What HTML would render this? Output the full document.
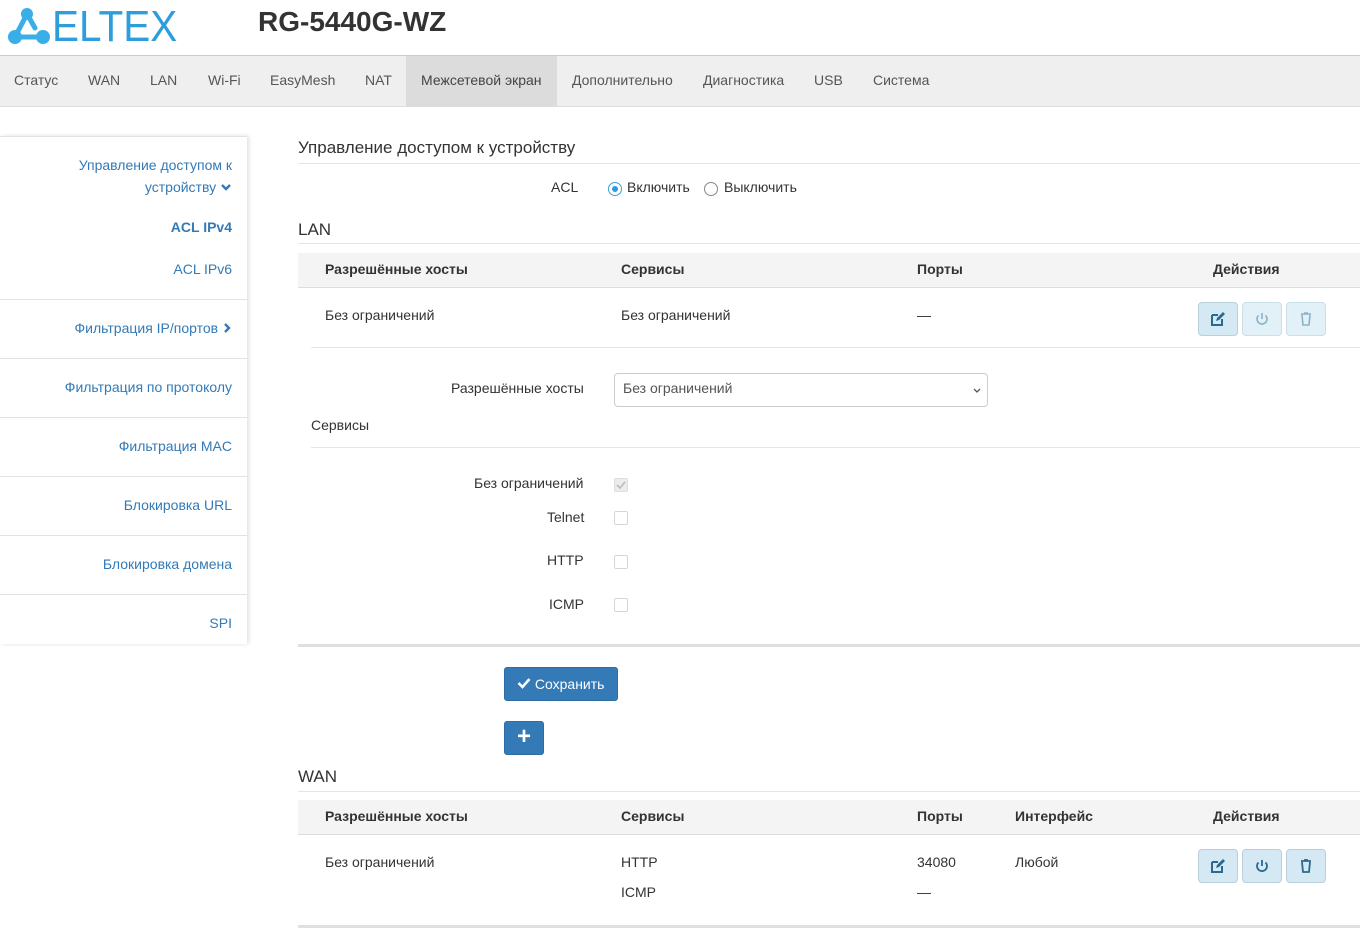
<!DOCTYPE html>
<html><head><meta charset="utf-8"><style>
*{box-sizing:border-box;margin:0;padding:0}
body{width:1360px;height:940px;overflow:hidden;background:#fff;font-family:"Liberation Sans",Arial,sans-serif;font-size:14px;color:#333;position:relative}
.a{position:absolute;white-space:nowrap}
.nav{position:absolute;left:0;top:55px;width:1360px;height:52px;background:#efefef;border-top:1px solid #ccc;border-bottom:1px solid #ddd}
.nav span{position:absolute;top:16px;color:#555;font-size:14px}
.side{position:absolute;left:0;top:136px;width:247px;height:508px;box-shadow:2px 0 4px rgba(0,0,0,.12);background:#fff}
.sl{position:absolute;left:0;width:247px;height:1px;background:#e2e2e2}
.st{position:absolute;right:15px;color:#337ab7;text-align:right;white-space:nowrap}
.hl{position:absolute;height:1px;background:#e5e5e5}
.th{position:absolute;font-weight:bold;color:#333}
.btn{position:absolute;width:40px;height:34px;border:1px solid #c9dfe9;border-radius:4px;background:#e2f0f7;display:flex;align-items:center;justify-content:center}
.cb{position:absolute;left:614px;width:14px;height:14px;border:1px solid #d6d6d6;border-radius:2px;background:#fff}
</style></head><body>
<svg class="a" style="left:5px;top:6px" width="48" height="40" viewBox="0 0 48 40">
<g stroke="#3aaee6" stroke-width="5" stroke-linecap="round"><line x1="22" y1="8" x2="10" y2="31"/><line x1="10" y1="31" x2="37" y2="31"/><line x1="22" y1="8" x2="30" y2="22"/></g>
<circle cx="22" cy="8" r="6" fill="#3aaee6"/><circle cx="10" cy="31" r="7" fill="#3aaee6"/><circle cx="38" cy="31" r="7" fill="#3aaee6"/>
</svg>
<div class="a" style="left:52px;top:2px;font-size:44px;color:#2e9ddc;letter-spacing:0px;transform:scaleX(0.92);transform-origin:left">ELTEX</div>
<div class="a" style="left:258px;top:6px;font-size:28px;font-weight:bold;color:#333">RG-5440G-WZ</div>
<div class="nav">
<div style="position:absolute;left:406px;top:0;width:151px;height:51px;background:#dcdcdc"></div>
<span style="left:14px">Статус</span><span style="left:88px">WAN</span><span style="left:150px">LAN</span><span style="left:208px">Wi-Fi</span><span style="left:270px">EasyMesh</span><span style="left:365px">NAT</span><span style="left:421px;color:#444">Межсетевой экран</span><span style="left:572px">Дополнительно</span><span style="left:703px">Диагностика</span><span style="left:814px">USB</span><span style="left:873px">Система</span>
</div>
<div class="side">
<div class="sl" style="top:0"></div>
<div class="st" style="top:18px;line-height:22px">Управление доступом к<br>устройству <svg width="12" height="10" viewBox="0 0 12 10"><path d="M2 3l4 4 4-4" stroke="#337ab7" stroke-width="2.4" fill="none"/></svg></div>
<div class="st" style="top:83px;font-weight:bold">ACL IPv4</div>
<div class="st" style="top:125px">ACL IPv6</div>
<div class="sl" style="top:163px"></div>
<div class="st" style="top:184px">Фильтрация IP/портов <svg width="10" height="10" viewBox="0 0 10 10"><path d="M3 1l4 4-4 4" stroke="#337ab7" stroke-width="2.4" fill="none"/></svg></div>
<div class="sl" style="top:222px"></div>
<div class="st" style="top:243px">Фильтрация по протоколу</div>
<div class="sl" style="top:281px"></div>
<div class="st" style="top:302px">Фильтрация MAC</div>
<div class="sl" style="top:340px"></div>
<div class="st" style="top:361px">Блокировка URL</div>
<div class="sl" style="top:399px"></div>
<div class="st" style="top:420px">Блокировка домена</div>
<div class="sl" style="top:458px"></div>
<div class="st" style="top:479px">SPI</div>
</div>

<div class="a" style="left:298px;top:138px;font-size:17px;color:#333">Управление доступом к устройству</div>
<div class="hl" style="left:298px;top:163px;width:1062px"></div>
<div class="a" style="left:551px;top:179px">ACL</div>
<div class="a" style="left:608px;top:182px;width:14px;height:14px;border-radius:50%;border:1px solid #3aa0e0;background:#fff"><div style="position:absolute;left:3px;top:3px;width:6px;height:6px;border-radius:50%;background:#2f9ae0"></div></div>
<div class="a" style="left:627px;top:179px">Включить</div>
<div class="a" style="left:704px;top:182px;width:14px;height:14px;border-radius:50%;border:1px solid #888"></div>
<div class="a" style="left:724px;top:179px">Выключить</div>

<div class="a" style="left:298px;top:220px;font-size:17px">LAN</div>
<div class="hl" style="left:298px;top:243px;width:1062px"></div>
<div class="a" style="left:298px;top:253px;width:1062px;height:35px;background:#f4f4f4;border-bottom:1px solid #ddd"></div>
<div class="th" style="left:325px;top:261px">Разрешённые хосты</div>
<div class="th" style="left:621px;top:261px">Сервисы</div>
<div class="th" style="left:917px;top:261px">Порты</div>
<div class="th" style="left:1213px;top:261px">Действия</div>
<div class="a" style="left:325px;top:307px">Без ограничений</div>
<div class="a" style="left:621px;top:307px">Без ограничений</div>
<div class="a" style="left:917px;top:307px">—</div>
<div class="btn" style="left:1198px;top:302px;background:#d5e9f4;border-color:#b9cfda"><svg width="16" height="16" viewBox="0 0 16 16"><path d="M2 4h6M2 4v10h10V8" stroke="#2a6a90" stroke-width="2" fill="none"/><path d="M6 10l1-3 6-6 2 2-6 6z" fill="#2a6a90"/></svg></div>
<div class="btn" style="left:1242px;top:302px"><svg width="16" height="16" viewBox="0 0 16 16"><path d="M8 2v6M4.5 4.5a5 5 0 1 0 7 0" stroke="#8bb3c8" stroke-width="1.6" fill="none"/></svg></div>
<div class="btn" style="left:1286px;top:302px"><svg width="14" height="16" viewBox="0 0 14 16"><path d="M2 3h10M5 2h4M3 4l1 10h6l1-10" stroke="#8bb3c8" stroke-width="1.6" fill="none"/></svg></div>
<div class="hl" style="left:311px;top:347px;width:1049px"></div>
<div class="a" style="left:451px;top:380px">Разрешённые хосты</div>
<div class="a" style="left:614px;top:373px;width:374px;height:34px;border:1px solid #ccc;border-radius:4px;padding:6px 8px;color:#555">Без ограничений<svg style="position:absolute;right:5px;top:13px" width="10" height="8" viewBox="0 0 10 8"><path d="M2 2l3 3 3-3" stroke="#555" stroke-width="1.3" fill="none"/></svg></div>
<div class="a" style="left:311px;top:417px">Сервисы</div>
<div class="hl" style="left:311px;top:447px;width:1049px"></div>
<div class="a" style="left:474px;top:475px">Без ограничений</div>
<div class="cb" style="top:478px;background:#ececec;border-color:#ddd"><svg style="position:absolute;left:1px;top:1px" width="10" height="10" viewBox="0 0 10 10"><path d="M1 5l3 3 5-6" stroke="#bbb" stroke-width="1.6" fill="none"/></svg></div>
<div class="a" style="left:547px;top:509px">Telnet</div><div class="cb" style="top:511px"></div>
<div class="a" style="left:547px;top:552px">HTTP</div><div class="cb" style="top:555px"></div>
<div class="a" style="left:549px;top:596px">ICMP</div><div class="cb" style="top:598px"></div>
<div class="a" style="left:298px;top:644px;width:1062px;height:3px;background:#e0e0e0"></div>
<div class="a" style="left:504px;top:667px;width:114px;height:34px;background:#337ab7;border:1px solid #2e6da4;border-radius:3px;color:#fff;padding:8px 0 0 12px"><svg width="14" height="12" viewBox="0 0 14 12"><path d="M1.5 6l4 4 7-8" stroke="#fff" stroke-width="2.6" fill="none"/></svg> Сохранить</div>
<div class="a" style="left:504px;top:721px;width:40px;height:34px;background:#337ab7;border:1px solid #2e6da4;border-radius:3px;color:#fff;font-size:24px;text-align:center;line-height:30px;font-weight:bold">+</div>

<div class="a" style="left:298px;top:767px;font-size:17px">WAN</div>
<div class="hl" style="left:298px;top:791px;width:1062px"></div>
<div class="a" style="left:298px;top:800px;width:1062px;height:35px;background:#f4f4f4;border-bottom:1px solid #ddd"></div>
<div class="th" style="left:325px;top:808px">Разрешённые хосты</div>
<div class="th" style="left:621px;top:808px">Сервисы</div>
<div class="th" style="left:917px;top:808px">Порты</div>
<div class="th" style="left:1015px;top:808px">Интерфейс</div>
<div class="th" style="left:1213px;top:808px">Действия</div>
<div class="a" style="left:325px;top:854px">Без ограничений</div>
<div class="a" style="left:621px;top:854px">HTTP</div>
<div class="a" style="left:621px;top:884px">ICMP</div>
<div class="a" style="left:917px;top:854px">34080</div>
<div class="a" style="left:917px;top:884px">—</div>
<div class="a" style="left:1015px;top:854px">Любой</div>
<div class="btn" style="left:1198px;top:849px;background:#d5e9f4;border-color:#b9cfda"><svg width="16" height="16" viewBox="0 0 16 16"><path d="M2 4h6M2 4v10h10V8" stroke="#2a6a90" stroke-width="2" fill="none"/><path d="M6 10l1-3 6-6 2 2-6 6z" fill="#2a6a90"/></svg></div>
<div class="btn" style="left:1242px;top:849px;background:#d5e9f4;border-color:#b9cfda"><svg width="16" height="16" viewBox="0 0 16 16"><path d="M8 2v6M4.5 4.5a5 5 0 1 0 7 0" stroke="#2a6a90" stroke-width="1.8" fill="none"/></svg></div>
<div class="btn" style="left:1286px;top:849px;background:#d5e9f4;border-color:#b9cfda"><svg width="14" height="16" viewBox="0 0 14 16"><path d="M2 3h10M5 2h4M3 4l1 10h6l1-10" stroke="#2a6a90" stroke-width="1.8" fill="none"/></svg></div>
<div class="a" style="left:298px;top:925px;width:1062px;height:3px;background:#e0e0e0"></div>
</body></html>
